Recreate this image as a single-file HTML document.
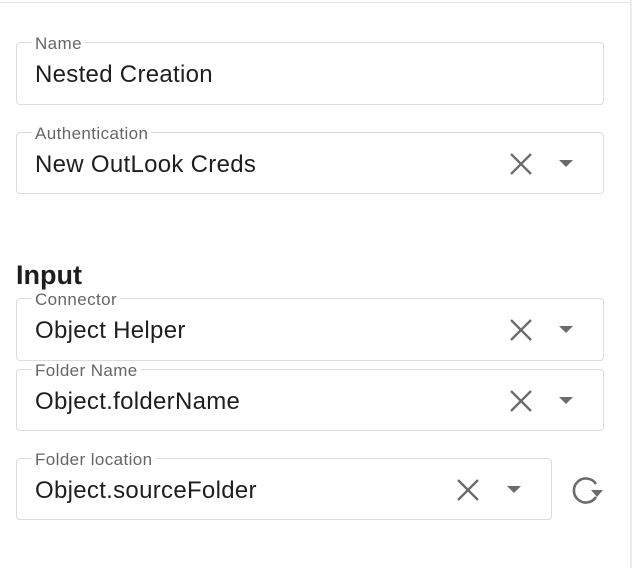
<!DOCTYPE html>
<html><head><style>
body{margin:0;width:638px;height:568px;background:#fff;position:relative;overflow:hidden;font-family:"Liberation Sans",Arial,sans-serif}
.top{position:absolute;left:0;top:2px;width:630px;height:1px;background:#e6e6e6}
.rl{position:absolute;left:630px;top:0;width:2px;height:568px;background:#ececec}
.box{position:absolute;left:16px;width:588px;height:62px;border:1px solid #dcdcdc;border-radius:4px;box-sizing:border-box}
.lab{position:absolute;left:15px;top:-9px;background:#fff;padding:0 3px;font-size:17px;letter-spacing:0.4px;color:#666;line-height:20px}
.val{position:absolute;left:18px;top:17px;font-size:24px;letter-spacing:0.3px;color:#1e1e1e;line-height:30px}
.x{position:absolute;top:19px}
.tri{position:absolute;width:0;height:0;border-left:7px solid transparent;border-right:7px solid transparent;border-top:7px solid #6b6b6b}
h2{position:absolute;left:16px;top:259px;margin:0;font-size:27px;font-weight:bold;color:#1e1e1e;line-height:32px}
</style></head><body>
<div class="top"></div><div class="rl"></div>
<div class="box" style="top:42px;height:63px"><div class="lab">Name</div><div class="val">Nested Creation</div></div>
<div class="box" style="top:132px"><div class="lab">Authentication</div><div class="val">New OutLook Creds</div>
<svg class="x" style="left:492px" width="24" height="24" viewBox="0 0 24 24"><path d="M2 2L22 22M22 2L2 22" stroke="#6b6b6b" stroke-width="2.3"/></svg><div class="tri" style="left:542px;top:27px"></div></div>
<h2>Input</h2>
<div class="box" style="top:298px;height:63px"><div class="lab">Connector</div><div class="val">Object Helper</div>
<svg class="x" style="left:492px" width="24" height="24" viewBox="0 0 24 24"><path d="M2 2L22 22M22 2L2 22" stroke="#6b6b6b" stroke-width="2.3"/></svg><div class="tri" style="left:542px;top:27px"></div></div>
<div class="box" style="top:369px"><div class="lab">Folder Name</div><div class="val">Object.folderName</div>
<svg class="x" style="left:492px" width="24" height="24" viewBox="0 0 24 24"><path d="M2 2L22 22M22 2L2 22" stroke="#6b6b6b" stroke-width="2.3"/></svg><div class="tri" style="left:542px;top:27px"></div></div>
<div class="box" style="top:458px;width:536px"><div class="lab">Folder location</div><div class="val">Object.sourceFolder</div>
<svg class="x" style="left:439px" width="24" height="24" viewBox="0 0 24 24"><path d="M2 2L22 22M22 2L2 22" stroke="#6b6b6b" stroke-width="2.3"/></svg><div class="tri" style="left:490px;top:27px"></div></div>
<svg style="position:absolute;left:568px;top:474px" width="36" height="34" viewBox="0 0 36 34"><path d="M28 10A12 12 0 1 0 28 23" fill="none" stroke="#6b6b6b" stroke-width="2.6"/><path d="M23 16L35 16L29 23Z" fill="#6b6b6b"/></svg>
</body></html>
